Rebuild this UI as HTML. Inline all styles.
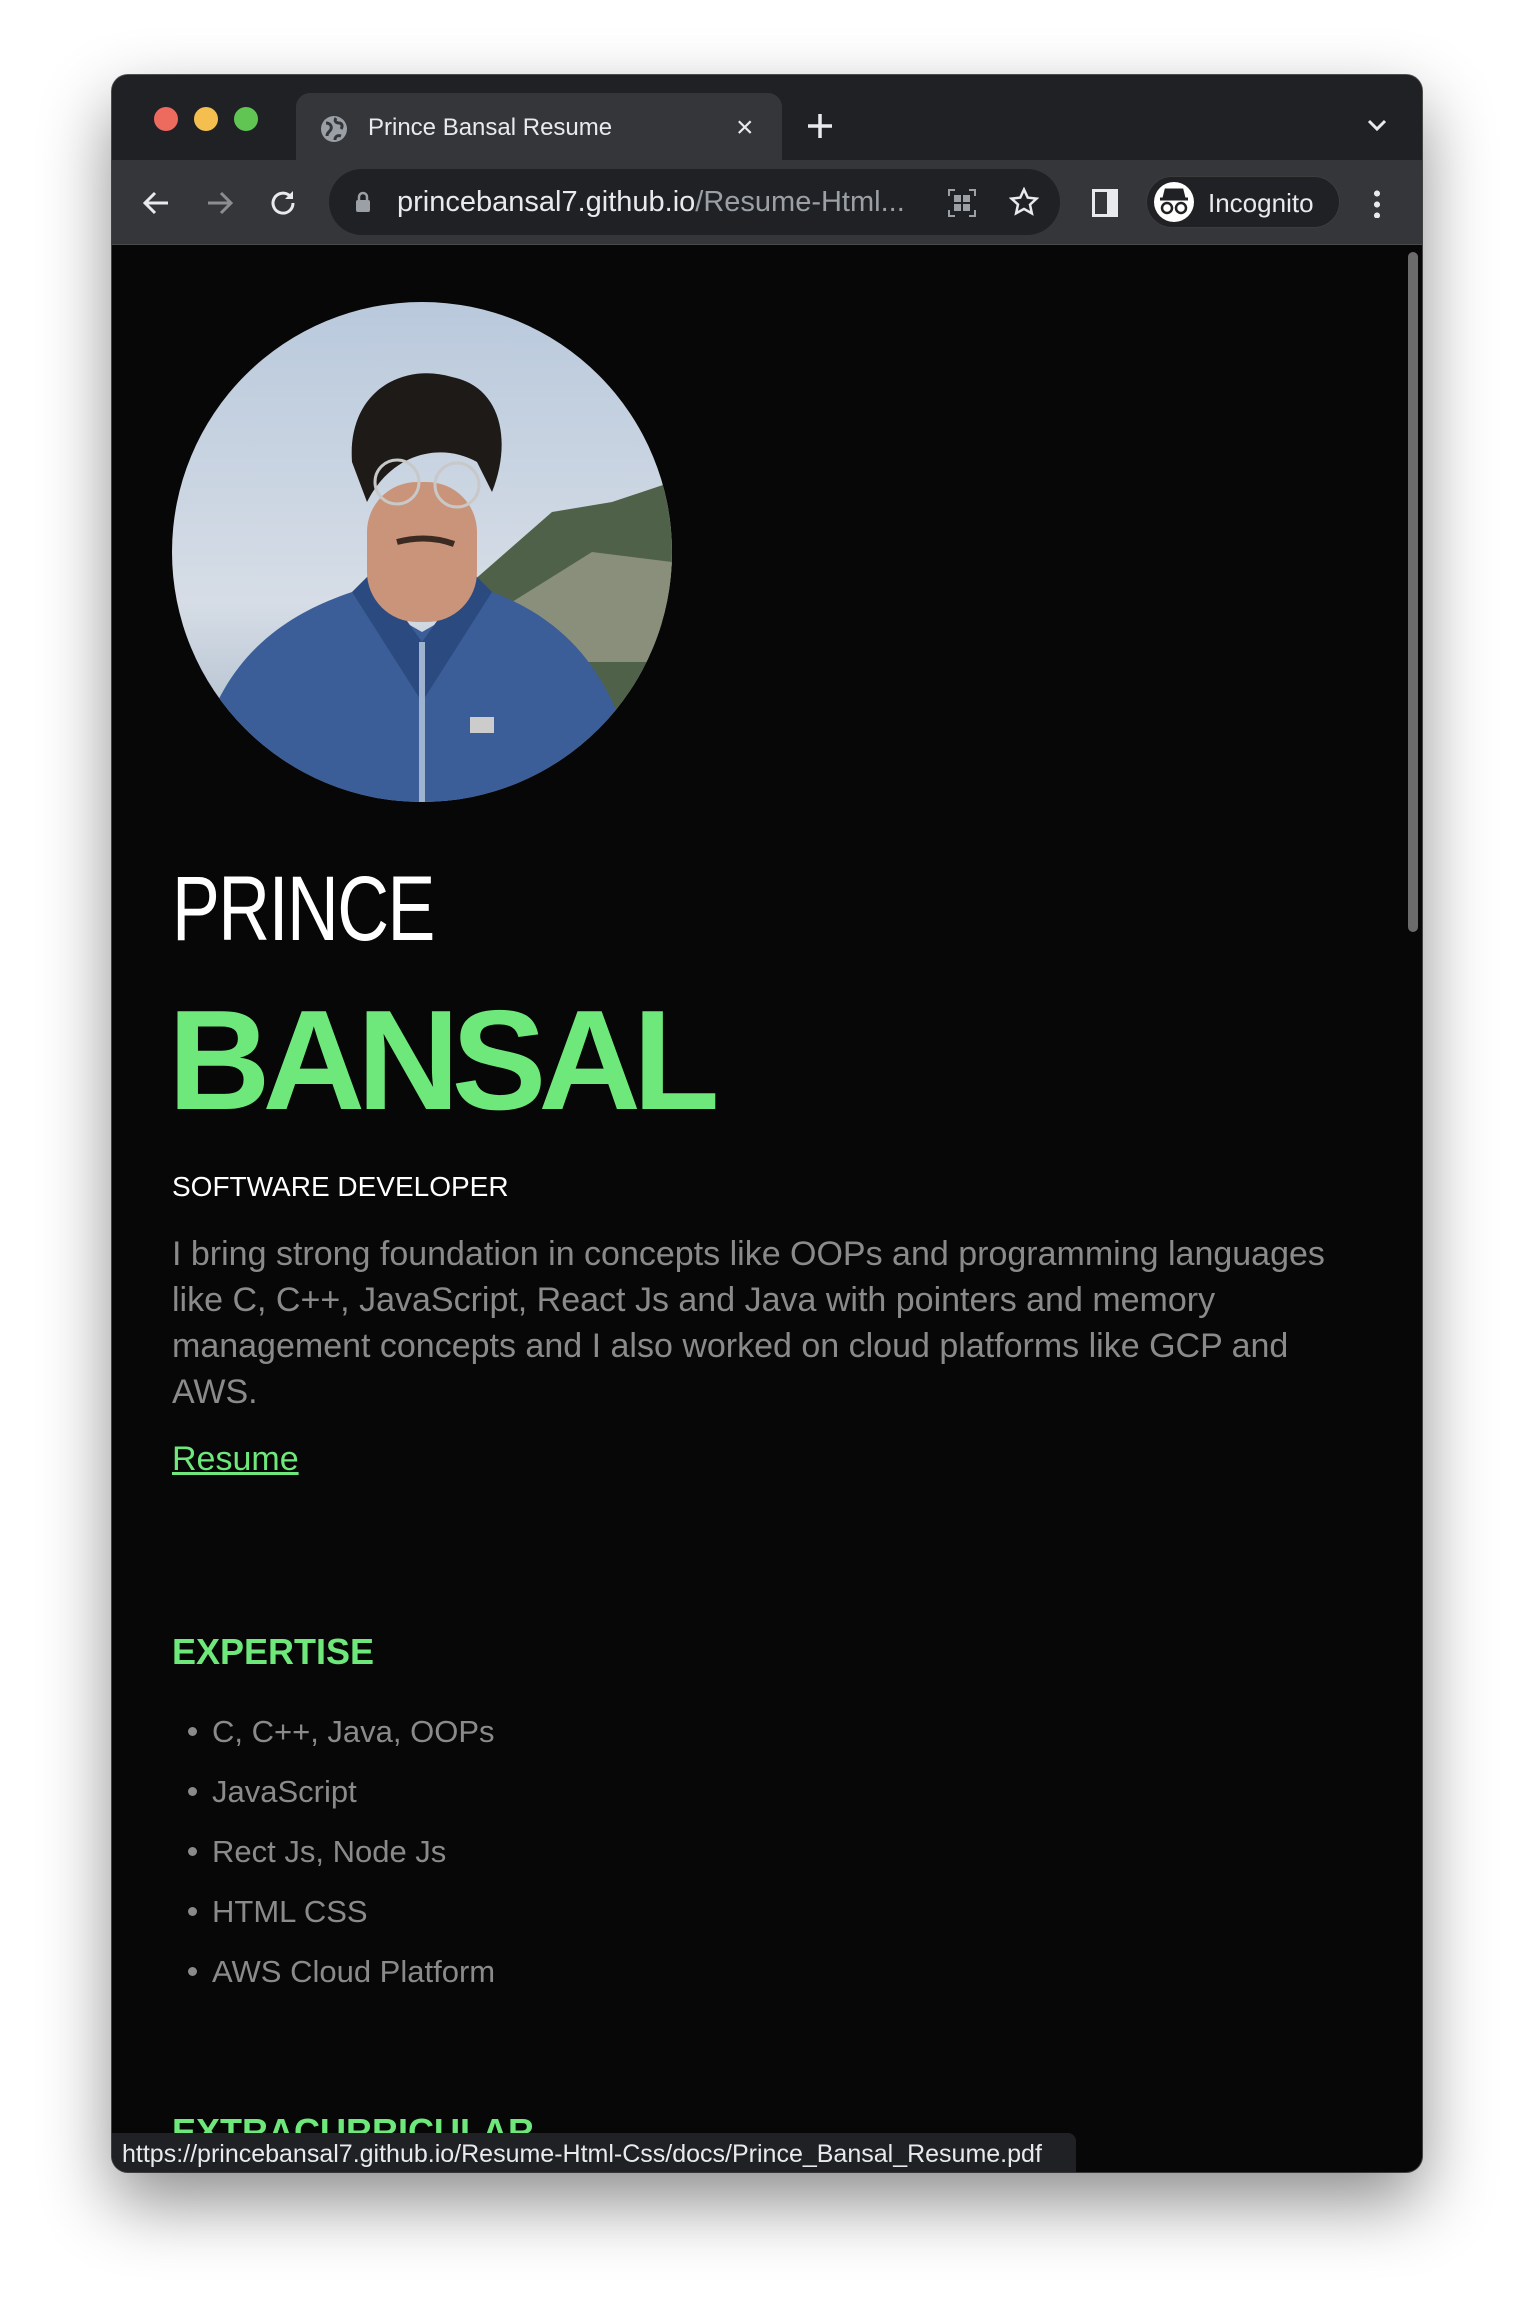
<!DOCTYPE html>
<html><head><meta charset="utf-8"><style>
*{margin:0;padding:0;box-sizing:border-box}
body{width:1534px;height:2322px;background:#fff;position:relative;overflow:hidden;font-family:"Liberation Sans",Arial,sans-serif}
.win{position:absolute;left:112px;top:75px;width:1310px;height:2097px;border-radius:16px;background:#070707;overflow:hidden;box-shadow:0 30px 70px rgba(0,0,0,.45),0 0 0 1px #555}
.tabbar{position:absolute;left:0;top:0;width:100%;height:85px;background:#202124}
.dot{position:absolute;top:32px;width:24px;height:24px;border-radius:50%}
.tab{position:absolute;left:184px;top:18px;width:486px;height:70px;background:#35363a;border-radius:14px 14px 0 0}
.toolbar{position:absolute;left:0;top:85px;width:100%;height:85px;background:#35363a;border-bottom:1px solid #4a4a4a}
.pill{position:absolute;left:217px;top:9px;width:731px;height:66px;border-radius:33px;background:#202124}
.inc{position:absolute;left:1034px;top:16px;width:194px;height:52px;border-radius:26px;background:#202124;border:1px solid #3c3c3c}
.t{position:absolute;white-space:nowrap;line-height:1}
.content{position:absolute;left:0;top:171px;width:100%;bottom:0}
.p{color:#8a8a8a;font-size:34px}
.li{position:absolute;left:100px;color:#8a8a8a;font-size:31px;white-space:nowrap;line-height:1}
.li:before{content:"";position:absolute;left:-24px;top:11px;width:9px;height:9px;border-radius:50%;background:#8a8a8a}
</style></head><body>
<div class="win">
 <div class="tabbar">
  <div class="dot" style="left:42px;background:#ed6a5e"></div>
  <div class="dot" style="left:82px;background:#f4bf4f"></div>
  <div class="dot" style="left:122px;background:#61c554"></div>
  <div class="tab">
   <svg style="position:absolute;left:24px;top:22px" width="28" height="28" viewBox="0 0 28 28"><circle cx="14" cy="14" r="13" fill="#9aa0a6"/><path d="M6 8c4 0 6 3 5 6s-4 3-4 7M16 3c-2 3 0 5 3 5s4 3 2 6M15 25c0-4 3-5 6-4" stroke="#35363a" stroke-width="3" fill="none"/></svg>
   <div class="t" style="left:72px;top:23px;color:#e8eaed;font-size:24px">Prince Bansal Resume</div>
   <div class="t" style="left:440px;top:20px;color:#e8eaed;font-size:30px">×</div>
  </div>
  <svg style="position:absolute;left:694px;top:37px" width="28" height="28"><path d="M14 2v24M2 14h24" stroke="#e8eaed" stroke-width="3.5"/></svg>
  <svg style="position:absolute;left:1255px;top:43px" width="20" height="14"><path d="M2 3l8 8 8-8" stroke="#e8eaed" stroke-width="3" fill="none"/></svg>
 </div>
 <div class="toolbar">
  <svg style="position:absolute;left:30px;top:30px" width="28" height="26"><path d="M26 13H4M13 3L3 13l10 10" stroke="#e8eaed" stroke-width="3" fill="none"/></svg>
  <svg style="position:absolute;left:94px;top:30px" width="28" height="26"><path d="M2 13h22M15 3l10 10-10 10" stroke="#8a8d91" stroke-width="3" fill="none"/></svg>
  <svg style="position:absolute;left:157px;top:28px" width="30" height="30"><path d="M24 15a10 10 0 1 1-3-7" stroke="#e8eaed" stroke-width="3" fill="none"/><path d="M24 3v8h-8z" fill="#e8eaed"/></svg>
  <div class="pill">
   <svg style="position:absolute;left:26px;top:22px" width="16" height="22"><rect x="1" y="9" width="14" height="12" rx="2" fill="#9aa0a6"/><path d="M4 10V6a4 4 0 0 1 8 0v4" stroke="#9aa0a6" stroke-width="2.5" fill="none"/></svg>
   <div class="t" style="left:68px;top:19px;font-size:29px;color:#e8eaed">princebansal7.github.io<span style="color:#9aa0a6">/Resume-Html...</span></div>
   <svg style="position:absolute;left:618px;top:19px" width="30" height="30"><path d="M2 8V2h6M22 2h6v6M28 22v6h-6M8 28H2v-6" stroke="#9aa0a6" stroke-width="2" fill="none"/><rect x="7" y="7" width="7" height="7" fill="#9aa0a6"/><rect x="16" y="7" width="7" height="7" fill="#9aa0a6"/><rect x="7" y="16" width="7" height="7" fill="#9aa0a6"/><rect x="16" y="16" width="7" height="7" fill="#9aa0a6"/></svg>
   <svg style="position:absolute;left:680px;top:18px" width="30" height="30" viewBox="0 0 24 24"><path d="M12 2l3 6.5 7 .8-5.2 4.8 1.5 7L12 17.5 5.7 21l1.5-7L2 9.3l7-.8z" stroke="#e8eaed" stroke-width="2" fill="none"/></svg>
  </div>
  <div style="position:absolute;left:980px;top:29px;width:26px;height:28px;border:3px solid #e8eaed;border-right-width:11px"></div>
  <div class="inc">
   <div style="position:absolute;left:7px;top:5px;width:40px;height:40px;border-radius:50%;background:#fff"></div>
   <svg style="position:absolute;left:11px;top:10px" width="32" height="30"><path d="M8 3h16l2 8H6z M2 12h28" stroke="#202124" stroke-width="3" fill="#202124"/><circle cx="9" cy="21" r="5" stroke="#202124" stroke-width="2.5" fill="none"/><circle cx="23" cy="21" r="5" stroke="#202124" stroke-width="2.5" fill="none"/></svg>
   <div class="t" style="left:61px;top:13px;color:#e8eaed;font-size:26px">Incognito</div>
  </div>
  <div style="position:absolute;left:1262px;top:28px;width:6px;height:30px;background:radial-gradient(circle,#e8eaed 2.8px,transparent 3.2px) 0 0/6px 11px"></div>
 </div>
 <div class="content">
  <div style="position:absolute;right:4px;top:6px;width:10px;height:680px;border-radius:5px;background:#6b6b6b"></div>
  <svg style="position:absolute;left:60px;top:56px" width="500" height="500" viewBox="0 0 500 500">
   <defs><clipPath id="c"><circle cx="250" cy="250" r="250"/></clipPath>
   <linearGradient id="sky" x1="0" y1="0" x2="0" y2="1"><stop offset="0" stop-color="#b9c9dc"/><stop offset=".6" stop-color="#d6dde6"/><stop offset="1" stop-color="#9fb0c2"/></linearGradient></defs>
   <g clip-path="url(#c)">
    <rect width="500" height="500" fill="url(#sky)"/>
    <path d="M300 280 L380 210 L440 200 L500 180 L500 420 L300 420z" fill="#4f6148"/>
    <path d="M340 300 L420 250 L500 260 L500 360 L360 360z" fill="#8a8f7c"/>
    <path d="M20 500 C30 380 90 320 180 290 L250 330 L320 290 C400 320 450 380 470 500z" fill="#3b5e99"/>
    <path d="M180 290 L250 400 L320 290 L300 270 L250 340 L200 270z" fill="#2b4a80"/>
    <path d="M247 340 L253 340 L253 500 L247 500z" fill="#9fb2cf"/>
    <rect x="195" y="180" width="110" height="140" rx="50" fill="#c99479"/>
    <path d="M180 160 C175 90 230 60 280 75 C330 85 340 140 320 190 L305 160 C270 140 220 150 195 200z" fill="#1e1a18"/>
    <circle cx="225" cy="180" r="22" stroke="#c8c8c8" stroke-width="3" fill="none"/>
    <circle cx="285" cy="183" r="22" stroke="#c8c8c8" stroke-width="3" fill="none"/>
    <path d="M225 240 Q255 232 282 242" stroke="#3a2a22" stroke-width="6" fill="none"/>
    <rect x="298" y="415" width="24" height="16" fill="#ccc"/>
   </g>
  </svg>
  <div class="t" style="left:60px;top:617px;color:#fff;font-size:92px;letter-spacing:-2px;transform:scaleX(0.78);transform-origin:0 0">PRINCE</div>
  <div class="t" style="left:56px;top:744px;color:#6ee87a;font-size:142px;font-weight:bold;letter-spacing:-8px">BANSAL</div>
  <div class="t" style="left:60px;top:927px;color:#fff;font-size:28px">SOFTWARE DEVELOPER</div>
  <div class="t p" style="left:60px;top:985px;line-height:46px">I bring strong foundation in concepts like OOPs and programming languages<br>like C, C++, JavaScript, React Js and Java with pointers and memory<br>management concepts and I also worked on cloud platforms like GCP and<br>AWS.</div>
  <div class="t" style="left:60px;top:1196px;color:#6ee87a;font-size:34px;text-decoration:underline">Resume</div>
  <div class="t" style="left:60px;top:1388px;color:#6ee87a;font-size:36px;font-weight:bold">EXPERTISE</div>
  <div class="li" style="top:1470px">C, C++, Java, OOPs</div>
  <div class="li" style="top:1530px">JavaScript</div>
  <div class="li" style="top:1590px">Rect Js, Node Js</div>
  <div class="li" style="top:1650px">HTML CSS</div>
  <div class="li" style="top:1710px">AWS Cloud Platform</div>
  <div class="t" style="left:60px;top:1868px;color:#6ee87a;font-size:36px;font-weight:bold">EXTRACURRICULAR</div>
 </div>
 <div style="position:absolute;left:0;top:2058px;width:964px;height:42px;background:#202124;border-top-right-radius:8px"></div>
 <div class="t" style="left:10px;top:2067px;color:#e8eaed;font-size:25px">https://princebansal7.github.io/Resume-Html-Css/docs/Prince_Bansal_Resume.pdf</div>
</div>
</body></html>
